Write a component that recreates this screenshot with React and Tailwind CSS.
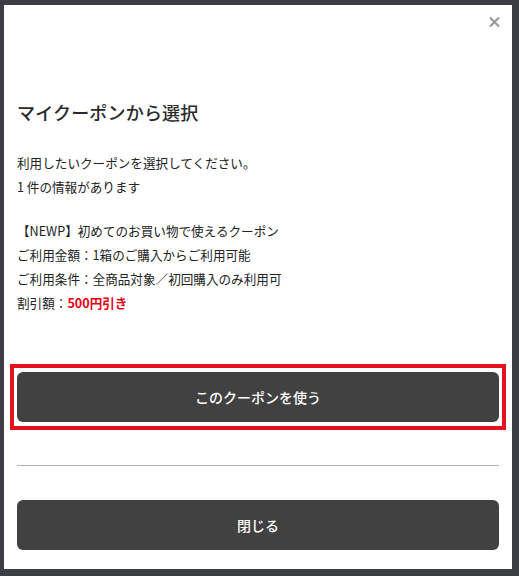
import React from "react";

export default function App() {
  const font = { fontFamily: '"Noto Sans CJK JP", "Noto Sans", sans-serif' };
  return (
    <div className="w-[519px] h-[576px] bg-[#3c3e43] overflow-hidden pt-[5px] pl-[4px]" style={font}>
      <div className="relative w-[508px] h-[564px] bg-white px-[13px] pt-[93px] text-[#222222]">
        <button className="absolute right-[12px] top-[12px] w-[11px] h-[10px] flex items-center justify-center" aria-label="close">
          <svg width="11" height="10" viewBox="0 0 11 10">
            <path d="M1 0.5 L10 9.5 M10 0.5 L1 9.5" stroke="#9a9a9a" strokeWidth="2.2" />
          </svg>
        </button>
        <h2 className="text-[18px] leading-[28px] font-medium tracking-[0.01em] text-[#2a2a2a]">マイクーポンから選択</h2>
        <div className="mt-[25px] text-[12.6px] leading-[24px]">
          <p>利用したいクーポンを選択してください。</p>
          <p>1 件の情報があります</p>
        </div>
        <div className="mt-[20px] text-[12.6px] leading-[24px]">
          <p>【NEWP】初めてのお買い物で使えるクーポン</p>
          <p>ご利用金額：1箱のご購入からご利用可能</p>
          <p>ご利用条件：全商品対象／初回購入のみ利用可</p>
          <p>
            割引額：<span className="text-[#e60012] font-bold">500円引き</span>
          </p>
        </div>
        <div className="mt-[49px] -mx-[7px] border-4 border-[#e3121f] px-[3px] py-[4px]">
          <button className="w-full h-[50px] rounded-[6px] bg-[#414141] text-white text-[14px] font-medium flex items-center justify-center">
            このクーポンを使う
          </button>
        </div>
        <div className="mt-[35px] h-px bg-[#b4b4b4]" />
        <button className="mt-[34px] w-full h-[50px] rounded-[6px] bg-[#414141] text-white text-[14px] font-medium flex items-center justify-center">
          閉じる
        </button>
      </div>
    </div>
  );
}
